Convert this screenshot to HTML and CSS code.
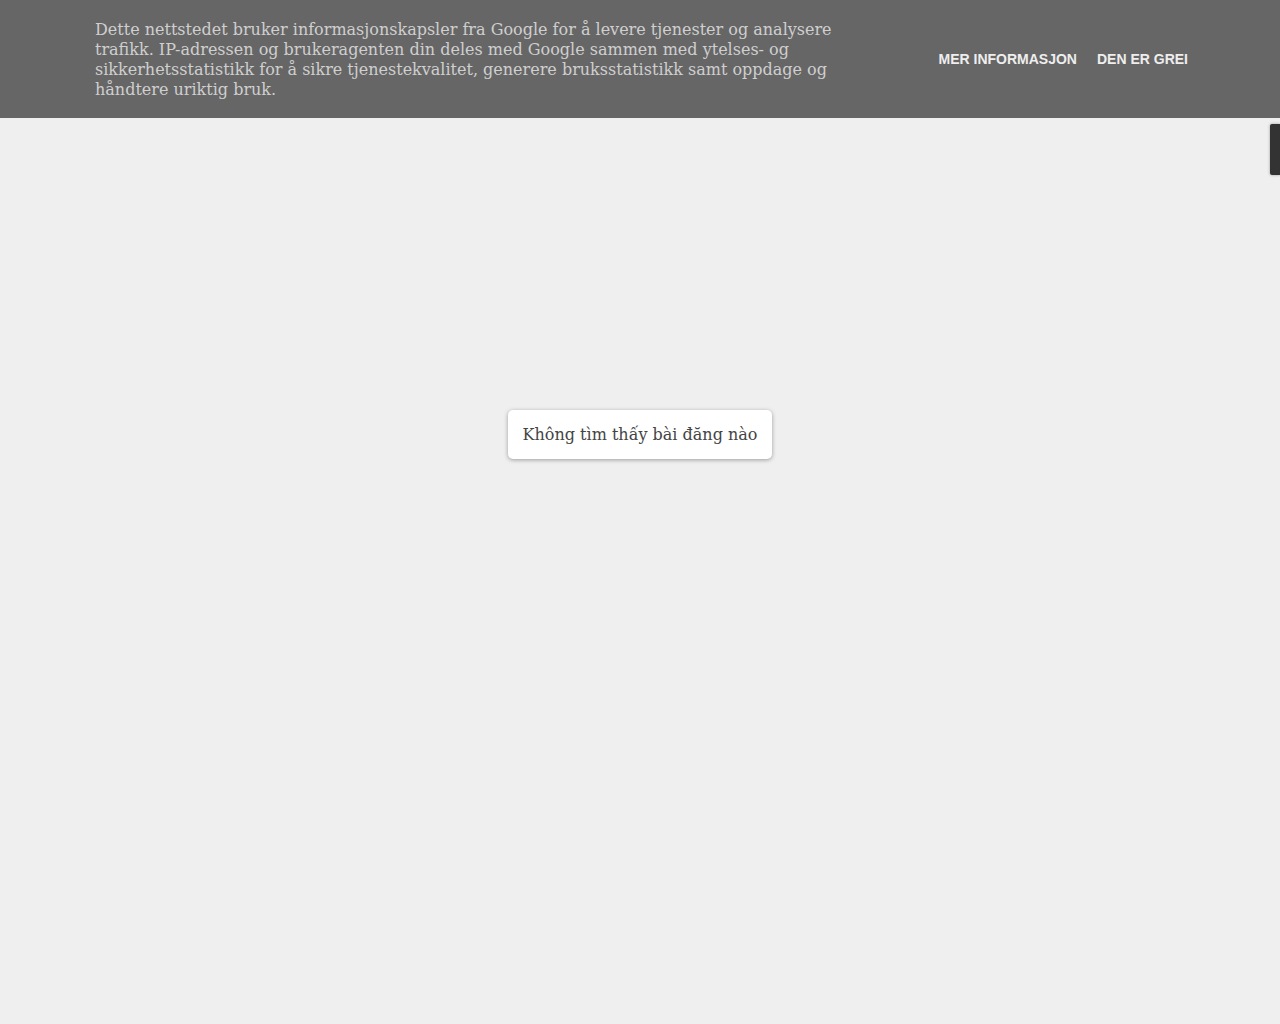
FILE: index.html
```html
<!DOCTYPE html>
<html lang="no">
<head>
<meta charset="utf-8">
<title>Blog</title>
<link rel="stylesheet" href="styles.css">
</head>
<body>
<div class="cookie-bar">
  <div class="cookie-text">Dette nettstedet bruker informasjonskapsler fra Google for å levere tjenester og analysere trafikk. IP-adressen og brukeragenten din deles med Google sammen med ytelses- og sikkerhetsstatistikk for å sikre tjenestekvalitet, generere bruksstatistikk samt oppdage og håndtere uriktig bruk.</div>
  <div class="cookie-actions">
    <a class="cookie-btn" href="#">MER INFORMASJON</a>
    <a class="cookie-btn" href="#">DEN ER GREI</a>
  </div>
</div>
<div class="side-tab"></div>
<main class="content">
  <div class="no-posts">Không tìm thấy bài đăng nào</div>
</main>
</body>
</html>
```
FILE: styles.css
```css
html, body {
  margin: 0;
  padding: 0;
}
body {
  background: #efefef;
  font-family: "DejaVu Serif", serif;
  min-height: 1024px;
}
.cookie-bar {
  background: #666666;
  height: 118px;
  box-sizing: border-box;
  padding: 20px 92px 18px 95px;
  display: flex;
  align-items: center;
  justify-content: space-between;
}
.cookie-text {
  width: 760px;
  color: #cfcfcf;
  font-size: 16px;
  line-height: 20px;
}
.cookie-actions {
  display: flex;
  gap: 20px;
  margin-bottom: 3px;
}
.cookie-btn {
  color: #eeeeee;
  font-family: "Liberation Sans", Arial, sans-serif;
  font-weight: bold;
  font-size: 14px;
  text-decoration: none;
}
.side-tab {
  position: absolute;
  top: 124px;
  right: 0;
  width: 10px;
  height: 51px;
  background: #333333;
  border-radius: 2px 0 0 2px;
  box-shadow: 0 0 3px rgba(0,0,0,0.35);
}
.content {
  display: flex;
  justify-content: center;
  padding-top: 292px;
}
.no-posts {
  background: #ffffff;
  color: #444444;
  font-size: 16px;
  line-height: 20px;
  padding: 15px 15px 14px;
  border-radius: 5px;
  box-shadow: 0 1px 4px rgba(0,0,0,0.35);
}
```
